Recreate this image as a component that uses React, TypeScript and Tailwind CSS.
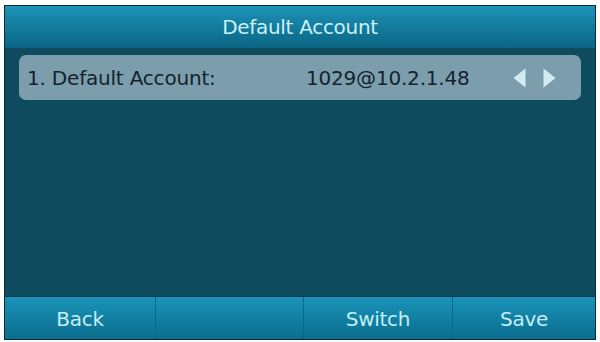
export default function App() {
  const font = { fontFamily: "Tahoma, 'DejaVu Sans', sans-serif" };
  return (
    <div className="w-[600px] h-[342px] bg-white pt-[5px] px-[4px] pb-[2px]" style={font}>
      <div className="flex h-full flex-col overflow-hidden border border-[#0a2c3a] bg-[#0e4b5f]">
        {/* title */}
        <div className="flex h-[42px] shrink-0 items-center justify-center bg-gradient-to-b from-[#1d93b6] to-[#0b6584] text-[20px] tracking-[-0.3px] text-[#c9f1f6]">
          Default Account
        </div>

        {/* list */}
        <div className="flex-1 px-[14px] pt-[7px]">
          <div className="flex h-[45px] items-center rounded-[7px] bg-[#7c9eac] pl-[8px] pr-[25px] text-[20px] tracking-[-0.2px] text-[#13232e]">
            <span className="w-[279px] shrink-0">1. Default Account:</span>
            <span className="min-w-0 flex-1">1029@10.2.1.48</span>
            <div className="flex shrink-0 items-center gap-[17px]">
              <svg className="block h-[20px] w-[13px] shrink-0" viewBox="0 0 13 20">
                <path d="M12.5 0.5 L0.5 10 L12.5 19.5 Z" fill="#d3ecf2" />
              </svg>
              <svg className="block h-[20px] w-[13px] shrink-0" viewBox="0 0 13 20">
                <path d="M0.5 0.5 L12.5 10 L0.5 19.5 Z" fill="#d3ecf2" />
              </svg>
            </div>
          </div>
        </div>

        {/* softkeys */}
        <div className="grid h-[43px] shrink-0 grid-cols-[151px_148px_149px_1fr] border-t border-[#0a3a4c] bg-gradient-to-b from-[#1994b9] to-[#0c6d8e] text-[20px] tracking-[-0.3px] text-[#c3eef5]">
          <div className="flex items-center justify-center border-r border-[#0d6683] pt-[2px]">Back</div>
          <div className="flex items-center justify-center border-r border-[#0d6683]"></div>
          <div className="flex items-center justify-center border-r border-[#0d6683] pt-[2px]">Switch</div>
          <div className="flex items-center justify-center pt-[2px]">Save</div>
        </div>
      </div>
    </div>
  );
}
